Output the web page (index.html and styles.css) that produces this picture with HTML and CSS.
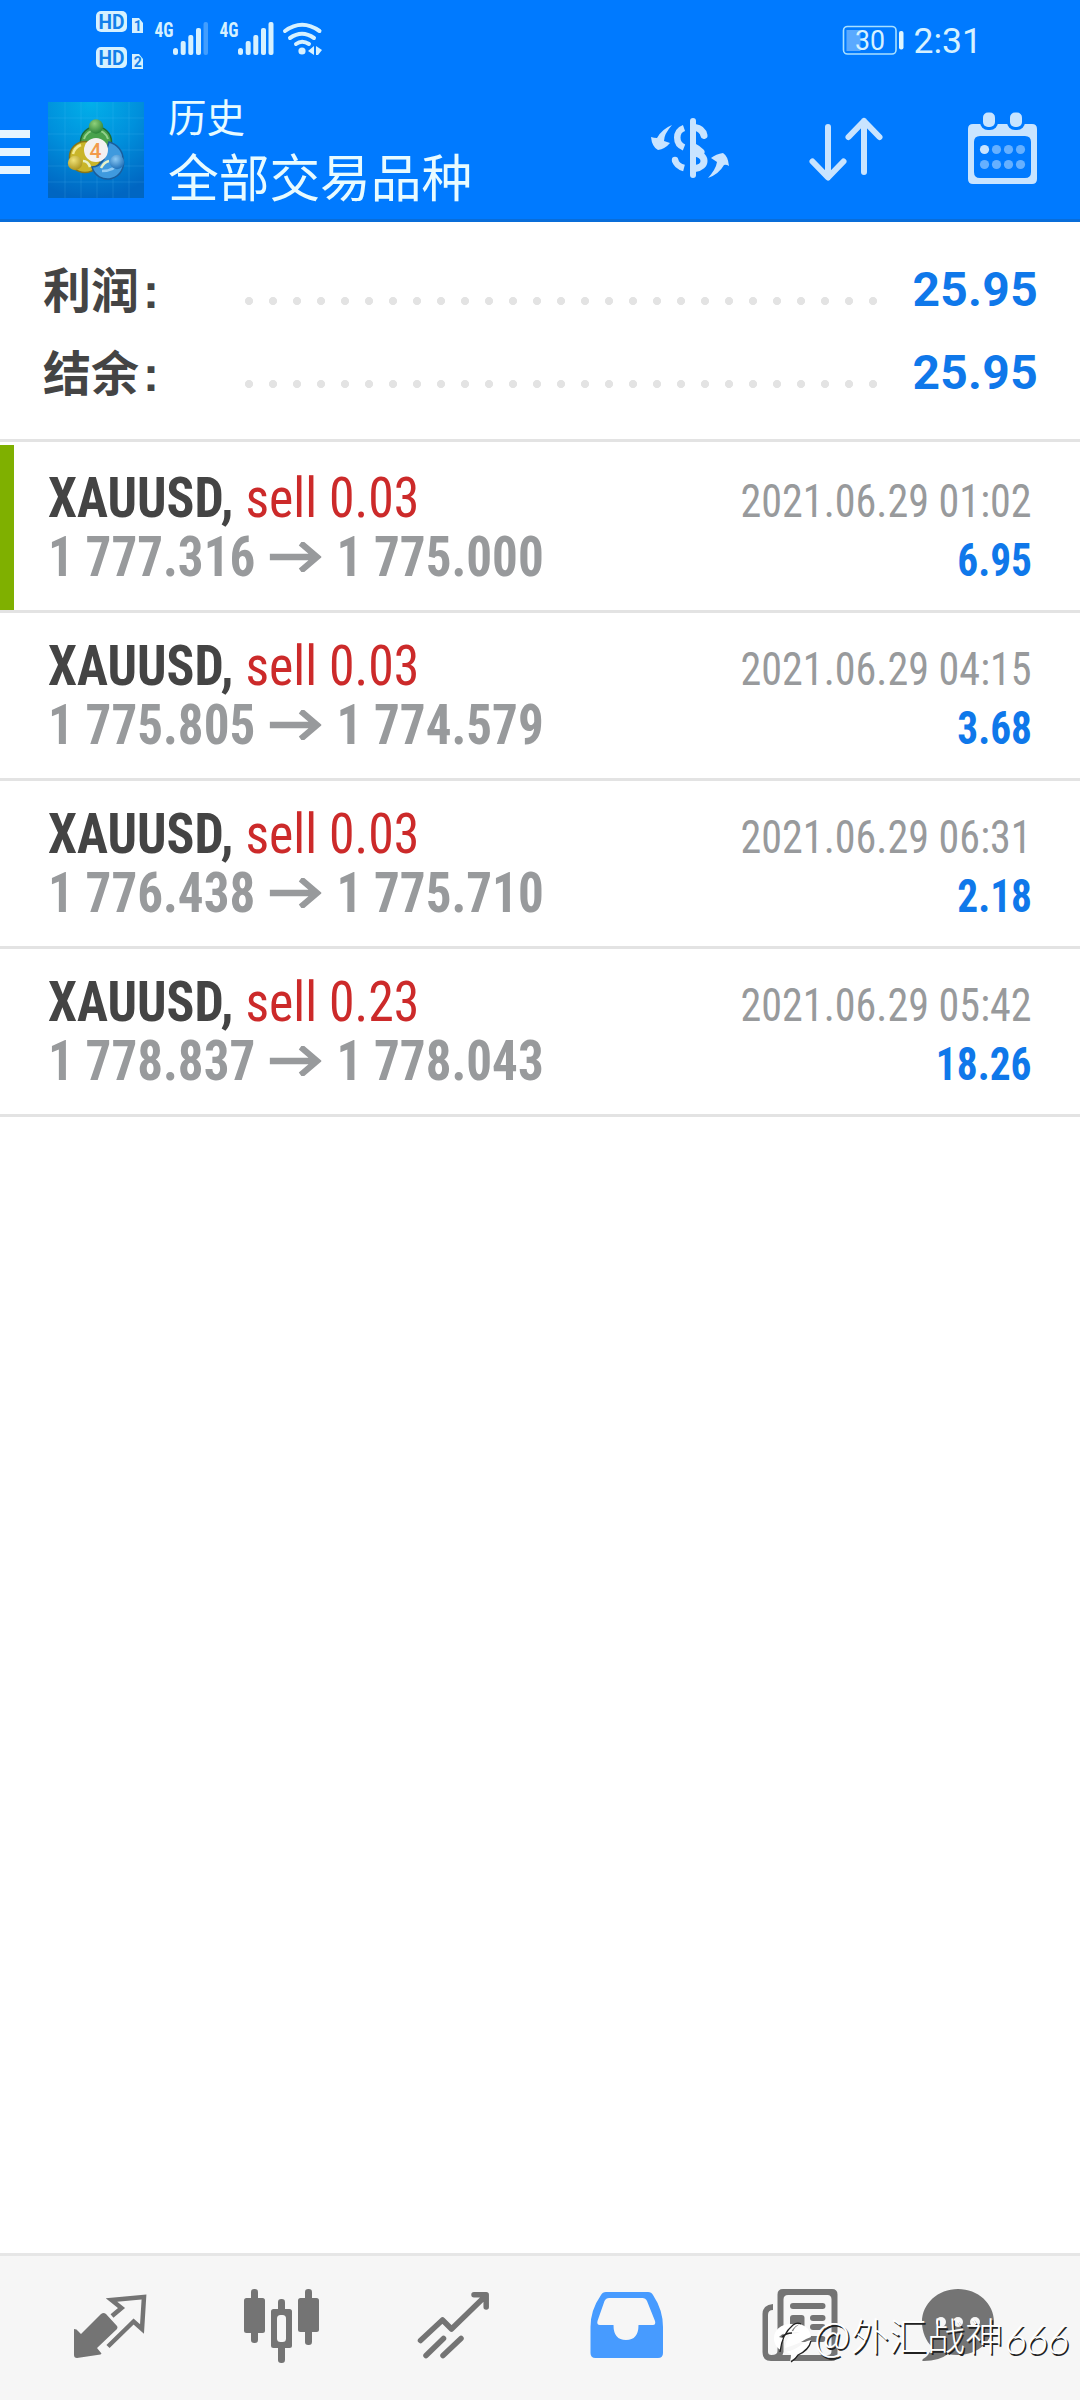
FILE: index.html
```
<!DOCTYPE html>
<html lang="zh-CN">
<head>
<meta charset="utf-8">
<title>历史</title>
<link rel="stylesheet" href="styles.css">
</head>
<body>
<div class="screen">
  <header class="header">
    <div class="status">
      <svg class="status-left" viewBox="90 0 240 80">
        <g fill="#d6f1ff">
          <rect x="96" y="11" width="31" height="21" rx="5"/>
          <rect x="96" y="47" width="31" height="21" rx="5"/>
          <path d="M132 18h7l4 5v10h-11zM132 54h7l4 5v10h-11z"/>
        </g>
        <g class="badge-text" fill="#1280ea">
          <text x="98.5" y="28.5" font-size="19.5" textLength="26" lengthAdjust="spacingAndGlyphs">HD</text>
          <text x="98.5" y="64.5" font-size="19.5" textLength="26" lengthAdjust="spacingAndGlyphs">HD</text>
          <text x="133.7" y="31" font-size="14">1</text>
          <text x="133.7" y="67" font-size="14">2</text>
        </g>
        <g class="net-text" fill="#d6f1ff">
          <text x="154.500" y="36.500" font-size="20.500" textLength="19" lengthAdjust="spacingAndGlyphs">4G</text>
          <text x="219.500" y="36.500" font-size="20.500" textLength="19" lengthAdjust="spacingAndGlyphs">4G</text>
        </g>
        <g fill="#d6f1ff">
          <rect x="173" y="48" width="5" height="7" rx="2.500"/><rect x="180.700" y="41" width="5" height="14" rx="2"/><rect x="188.300" y="35" width="5" height="20" rx="2"/><rect x="196" y="28" width="5" height="27" rx="2"/><rect x="203.500" y="22" width="4.500" height="33" rx="2" opacity=".3"/>
          <rect x="238" y="48" width="5" height="7" rx="2.500"/><rect x="245.700" y="41" width="5" height="14" rx="2"/><rect x="253.300" y="35" width="5" height="20" rx="2"/><rect x="261" y="28" width="5" height="27" rx="2"/><rect x="268.500" y="22" width="5" height="33" rx="2"/>
          <circle cx="302" cy="51" r="3.600"/>
          <path d="M314 46v9l-6-4zM316 46l6 4-4 5h-2z"/>
        </g>
        <path d="M285 31q17-12.500 34.500 0M290 38q12-8.500 24 0M296 44q6-4.500 13 0" fill="none" stroke="#d6f1ff" stroke-width="4" stroke-linecap="round"/>
      </svg>
      <div class="status-right">
        <svg class="battery" viewBox="842 22 64 34">
          <rect x="844.500" y="25.500" width="52.500" height="27.500" rx="4" fill="none" stroke="#a9e0ff" stroke-width="1.600"/>
          <rect x="847.500" y="29" width="14" height="21" fill="#5aa9ff"/>
          <rect x="900" y="30" width="4.500" height="18.500" rx="2" fill="#dff6ff"/>
          <text x="856" y="49" font-size="27" fill="#d6f1ff" textLength="30" lengthAdjust="spacingAndGlyphs">30</text>
        </svg>
        <span class="clock">2:31</span>
      </div>
    </div>
    <div class="toolbar">
      <div class="menu"><i></i><i></i><i></i></div>
      <svg class="logo" viewBox="0 0 96 96">
        <defs>
          <radialGradient id="sky" cx=".45" cy="0" r="1"><stop offset="0" stop-color="#02b0ea"/><stop offset=".5" stop-color="#0090dc"/><stop offset="1" stop-color="#0066c2"/></radialGradient>
          <radialGradient id="green" cx=".4" cy=".3" r=".8"><stop offset="0" stop-color="#8fd07a"/><stop offset="1" stop-color="#1f7a30"/></radialGradient>
          <radialGradient id="gold" cx=".4" cy=".3" r=".8"><stop offset="0" stop-color="#f0e277"/><stop offset="1" stop-color="#a38a12"/></radialGradient>
          <radialGradient id="blue" cx=".4" cy=".3" r=".8"><stop offset="0" stop-color="#8ccaf5"/><stop offset="1" stop-color="#1264b0"/></radialGradient>
        </defs>
        <rect width="96" height="96" fill="url(#sky)"/>
        <path d="M0 16H96M0 32H96M0 48H96M0 64H96M0 80H96M17 0V96M33 0V96M49 0V96M65 0V96M81 0V96" stroke="#6cc8ff" stroke-opacity=".16" fill="none"/>
        <circle cx="48" cy="40" r="15.500" fill="#49a24c" stroke="#1f6b34" stroke-width="1.500"/>
        <circle cx="37" cy="55" r="15.500" fill="#c9b52a" stroke="#85751a" stroke-width="1.500"/>
        <path d="M75 57a15.500 15.500 0 0 1-31 8c4 0 9-3 12-8l5-17c8 2 14 9 14 17z" fill="#3f9ade" stroke="#1a5d9c" stroke-width="1.500"/>
        <path d="M36 37a12.500 12.500 0 0 1 24 0" fill="none" stroke="#93d18c" stroke-width="2"/>
        <path d="M25 52a13 13 0 0 1 8-9" fill="none" stroke="#f3e98f" stroke-width="2.500"/>
        <path d="M35 59q5 0 7 6M61 59q-5 1-8 7" fill="none" stroke="#e8f2c8" stroke-width="2.500"/>
        <path d="M54 69q13 0 18-10" fill="none" stroke="#8fcaf4" stroke-width="2.500"/>
        <circle cx="48" cy="24.500" r="7.200" fill="url(#green)"/>
        <circle cx="27" cy="61" r="7.200" fill="url(#gold)"/>
        <circle cx="69" cy="60" r="7.200" fill="url(#blue)"/>
        <circle cx="48" cy="48" r="12" fill="#f4f1f1"/>
        <text class="logo-num" x="41.500" y="55.500" font-size="21" fill="#f29a4b">4</text>
      </svg>
      <div class="titles"><div class="title">历史</div><div class="subtitle">全部交易品种</div></div>
      <svg class="tools" viewBox="640 80 440 139">
        <g fill="none" stroke="#c9e4ff" stroke-width="6" stroke-linecap="round" stroke-linejoin="round">
          <path d="M693 121V175"/>
          <path d="M695 127.500q7.500 1 9 8M695 153c12 2 12 14 0 15.500" stroke-width="7"/>
          <path d="M684 128c-9 3-9 16 0 19.500M675 160q1.500 6 9 8" stroke-width="6.500" stroke-linecap="butt"/>
          <path d="M694 147q4 2 7 5" stroke-width="7"/>
          <path d="M828 127V177M812.500 161.500L828 177.500L843.500 161.500M864 172V121M848.500 137L864 121L879.500 137"/>
        </g>
        <g fill="#c9e4ff">
          <circle cx="675" cy="160" r="3.200"/>
          <path d="M672 125q-8 9-8 16l6 2q-5 6-12 7-6-3-7-13 3 1 6 1 5-9 15-13z"/>
          <path d="M708 178q8-9 9-16l-6-4q5-4 12-5 5 3 6 13-3-2-5-1-5 9-16 13z"/>
          <path fill-rule="evenodd" d="M973 124H1032q5 0 5 5V179q0 5-5 5H973q-5 0-5-5V129q0-5 5-5zM980 136q-6 0-6 6V172q0 6 6 6H1025q6 0 6-6V142q0-6-6-6z"/>
          <rect x="980" y="110" width="18" height="20" rx="8" fill="#007aff"/><rect x="1007" y="110" width="18" height="20" rx="8" fill="#007aff"/>
          <rect x="983" y="112.500" width="12" height="14.500" rx="5"/><rect x="1010" y="112.500" width="12" height="14.500" rx="5"/>
          <circle cx="984.500" cy="149.500" r="4.600"/>
        </g>
        <g fill="#66b0ff">
          <circle cx="996.500" cy="149.500" r="4.600"/><circle cx="1008.500" cy="149.500" r="4.600"/><circle cx="1020.500" cy="149.500" r="4.600"/>
          <circle cx="984.500" cy="164.500" r="4.600"/><circle cx="996.500" cy="164.500" r="4.600"/><circle cx="1008.500" cy="164.500" r="4.600"/><circle cx="1020.500" cy="164.500" r="4.600"/>
        </g>
      </svg>
    </div>
  </header>

  <section class="summary">
    <div class="sum-row"><span class="sum-label">利润<b class="colon">:</b></span><span class="dots"></span><span class="sum-value">25.95</span></div>
    <div class="sum-row"><span class="sum-label">结余<b class="colon">:</b></span><span class="dots"></span><span class="sum-value">25.95</span></div>
  </section>

  <main class="deals">
    <article class="deal marked">
      <div class="line"><span class="symbol">XAUUSD, <span class="sell">sell 0.03</span></span><time class="time">2021.06.29 01:02</time></div>
      <div class="line"><span class="price">1 777.316<svg class="arrow" viewBox="0 0 57 30"><path d="M0 15H53M34 1L52 15L34 29"/></svg>1 775.000</span><span class="profit">6.95</span></div>
    </article>
    <article class="deal">
      <div class="line"><span class="symbol">XAUUSD, <span class="sell">sell 0.03</span></span><time class="time">2021.06.29 04:15</time></div>
      <div class="line"><span class="price">1 775.805<svg class="arrow" viewBox="0 0 57 30"><path d="M0 15H53M34 1L52 15L34 29"/></svg>1 774.579</span><span class="profit">3.68</span></div>
    </article>
    <article class="deal">
      <div class="line"><span class="symbol">XAUUSD, <span class="sell">sell 0.03</span></span><time class="time">2021.06.29 06:31</time></div>
      <div class="line"><span class="price">1 776.438<svg class="arrow" viewBox="0 0 57 30"><path d="M0 15H53M34 1L52 15L34 29"/></svg>1 775.710</span><span class="profit">2.18</span></div>
    </article>
    <article class="deal">
      <div class="line"><span class="symbol">XAUUSD, <span class="sell">sell 0.23</span></span><time class="time">2021.06.29 05:42</time></div>
      <div class="line"><span class="price">1 778.837<svg class="arrow" viewBox="0 0 57 30"><path d="M0 15H53M34 1L52 15L34 29"/></svg>1 778.043</span><span class="profit">18.26</span></div>
    </article>
  </main>

  <nav class="tabs">
    <svg class="tab" viewBox="0 2256 180 144">
      <path d="M103 2313q2 0 3 1l11 12q1 1 0 3L97 2348l4.500 5.500-1 1L77 2358q-3 0-3-3V2329q3 0 4 2l3 3 20-20z" fill="#747474"/>
      <path d="M112 2316L121.500 2308L111.500 2300L144 2297L142 2329L133.600 2321.500L108 2346.500" fill="none" stroke="#747474" stroke-width="4.500"/>
    </svg>
    <svg class="tab" viewBox="180 2256 180 144">
      <g fill="#747474">
        <rect x="244" y="2298" width="21" height="35" rx="2.500"/><rect x="251" y="2289" width="7" height="54" rx="3.200"/>
        <rect x="298" y="2298" width="21" height="34" rx="2.500"/><rect x="305" y="2289" width="7" height="56" rx="3.200"/>
        <rect x="278" y="2299" width="7" height="64" rx="3.200"/><rect x="271" y="2309" width="21" height="39" rx="2.500"/>
      </g>
      <rect x="277" y="2315" width="9" height="27" rx="3.500" fill="#f6f6f6"/>
    </svg>
    <svg class="tab" viewBox="360 2256 180 144">
      <path d="M420.500 2340.500L442.500 2320L451.500 2329L485.500 2296M474 2294.800H486.200V2307M426 2355.500L443.500 2338.500M443 2355.500L461 2338.500" fill="none" stroke="#747474" stroke-width="5.500" stroke-linecap="round" stroke-linejoin="round"/>
    </svg>
    <svg class="tab" viewBox="540 2256 180 144">
      <path fill="#479bff" fill-rule="evenodd" d="M606 2292H648q3.500 0 5 3 10 15 10 32v26q0 5-5 5H595.500q-5 0-5-5v-26q0-17 10.500-32 1.500-3 5-3zM609 2298q-3 0-4.500 3l-7 20q-1 4 2.500 4H613.500q0 15 12.500 15t12.500-15H653q3 0 2-4l-8-20q-1.500-3-4.500-3z"/>
    </svg>
    <svg class="tab" viewBox="720 2256 180 144">
      <path fill="#747474" fill-rule="evenodd" d="M783 2289H832q5.500 0 5.500 5.500V2355q0 6-6 6H771q-8.500 0-8.500-9V2314q0-9 10.500-10v6q-5 0-5 5V2352q0 3 3.500 3 6 0 6-4V2294.500q0-5.500 5.500-5.500zM788 2295q-4.500 0-4.500 4.500V2352l-1 3H828q3.500 0 3.500-4V2299.500q0-4.500-4-4.500z"/>
      <g fill="#747474"><rect x="790" y="2303" width="35.500" height="6" rx="3"/><rect x="790" y="2315" width="14.500" height="16" rx="3"/><rect x="810" y="2315" width="15.500" height="6" rx="3"/><rect x="810" y="2324" width="15.500" height="6" rx="3"/><rect x="790" y="2336" width="35.500" height="6" rx="3"/></g>
    </svg>
    <svg class="tab" viewBox="900 2256 180 144">
      <path fill="#747474" d="M958 2289c20 0 36 14.500 36 33s-16 33-36 33q-6 0-10-1-9 7-24 7-3 0-1-2 6-3 9-12c-6-6-10-15-10-25 0-18.500 16-33 36-33z"/>
      <g fill="#f6f6f6"><circle cx="941" cy="2322" r="5"/><circle cx="958" cy="2322" r="5"/><circle cx="975" cy="2322" r="5"/></g>
    </svg>
  </nav>
  <div class="watermark">
    <svg class="wm-logo" viewBox="772 2318 42 46">
      <path d="M791 2324c-10 0-17 6-17 14 0 6 3 10 7 12q-1-7 4-12-4 0-6-1 5-5 12-5 4-7 9-8zM800 2324q-6 3-7 8h7q-4 2-9 2-5 6-6 14 10-3 16-6 4-3 10-5-1-10-11-13zM811 2340q-6 1-10 5-6 5-15 7 3 1 5 2 0 4-1 7 6-3 8-7 10-3 13-14z" fill="#fff"/>
      <path d="M780 2352q2-18 13-27 4-3 8-1M782 2337q4-4 10-4M811 2341q-2 9-13 14-2 4-7 7" fill="none" stroke="#222" stroke-width="1.300"/>
    </svg>
    <span class="wm-at">@</span><span class="wm-name">外汇战神</span><span class="wm-num">666</span>
  </div>
</div>
</body>
</html>
```
FILE: styles.css
```
* { box-sizing: border-box; }
body { margin: 0; background: #fff; font-family: Roboto, "Noto Sans CJK SC", sans-serif; }
svg { display: block; flex: none; }
.screen { position: relative; width: 1080px; height: 2400px; display: flex; flex-direction: column; overflow: hidden; }

.header { height: 222px; background: #007aff; border-bottom: 3px solid #096dd9; flex: none; }
.status { height: 80px; display: flex; justify-content: space-between; padding: 0 98px 0 90px; }
.status-left { width: 240px; height: 80px; }
.badge-text { font-weight: 700; }
.net-text { font-family: "Roboto Condensed", Roboto, sans-serif; font-weight: 700; }
.status-right { display: flex; align-items: center; gap: 9px; }
.battery { width: 64px; height: 34px; }
.clock { font-size: 35.5px; line-height: 80px; padding-top: 1px; color: #d6f1ff; }

.toolbar { height: 139px; display: flex; align-items: flex-start; }
.menu { width: 30px; padding-top: 50px; display: flex; flex-direction: column; gap: 10px; }
.menu i { height: 8px; background: #e6f5ff; }
.logo { width: 96px; height: 96px; margin: 22px 0 0 18px; }
.logo-num { font-weight: 500; }
.titles { width: 470px; margin-left: 24px; color: #e8fbff; font-family: "Noto Sans CJK SC", sans-serif; white-space: nowrap; }
.title { font-size: 38.5px; line-height: 48px; margin-top: 11px; }
.subtitle { font-size: 50.7px; line-height: 66px; margin-top: 3px; font-weight: 400; }
.tools { width: 440px; height: 139px; margin-left: 2px; }

.summary { height: 220px; padding: 25px 42px 0 43px; border-bottom: 3px solid #e3e3e3; flex: none; }
.sum-row { height: 83px; display: flex; }
.sum-label { width: 201px; font: 700 48px/80px "Noto Sans CJK SC", sans-serif; color: #444; }
.colon { font-family: "Liberation Sans", sans-serif; margin-left: 4px; }
.dots { width: 648px; height: 10px; margin-top: 49px; background: radial-gradient(circle at 5px 5px, #e3e3e3 3.7px, transparent 4.4px) 0 0 / 24px 10px repeat-x; }
.sum-value { margin-left: auto; font-size: 48px; font-weight: 700; line-height: 85px; letter-spacing: .3px; color: #0f78ea; }

.deals { flex: 1; padding-top: 3px; font-family: "Roboto Condensed", Roboto, sans-serif; }
.deal { height: 168px; padding: 24px 48px 0 48px; border-bottom: 3px solid #e3e3e3; }
.marked { background: linear-gradient(#7fb000, #7fb000) 0 0 / 14px 100% no-repeat; }
.line { height: 59px; display: flex; align-items: baseline; justify-content: space-between; font-size: 56px; line-height: 59px; white-space: nowrap; }
.symbol { font-weight: 700; color: #444; transform: scaleX(.925); transform-origin: 0 0; }
.sell { font-weight: 400; color: #cc2a2a; }
.price { font-weight: 700; color: #989a9c; transform: scaleX(.912); transform-origin: 0 0; }
.arrow { display: inline-block; width: 57px; height: 30px; margin: 0 16px; vertical-align: 4px; fill: none; stroke: #989a9c; stroke-width: 6.5; }
.time { font-size: 46.500px; color: #989a9c; transform: scaleX(.905); transform-origin: 100% 0; }
.profit { font-size: 46.500px; font-weight: 700; color: #0f78ea; transform: scaleX(.89); transform-origin: 100% 0; }

.tabs { height: 147px; flex: none; border-top: 3px solid #e6e6e6; background: #f6f6f6; display: flex; }
.tab { width: 180px; height: 144px; }

.watermark { position: absolute; left: 772px; top: 2309px; height: 50px; display: flex; color: #fff; line-height: 50px; white-space: nowrap; text-shadow: 1.5px 1.5px .5px #222; }
.wm-logo { width: 42px; height: 46px; margin-top: 9px; }
.wm-at { width: 37px; font: 300 40px/50px "Noto Sans CJK SC", sans-serif; }
.wm-name { width: 153px; font: 300 38px/50px "Noto Sans CJK SC", sans-serif; }
.wm-num { font: italic 300 42px/58px Lato, sans-serif; letter-spacing: -1.200px; }
```
